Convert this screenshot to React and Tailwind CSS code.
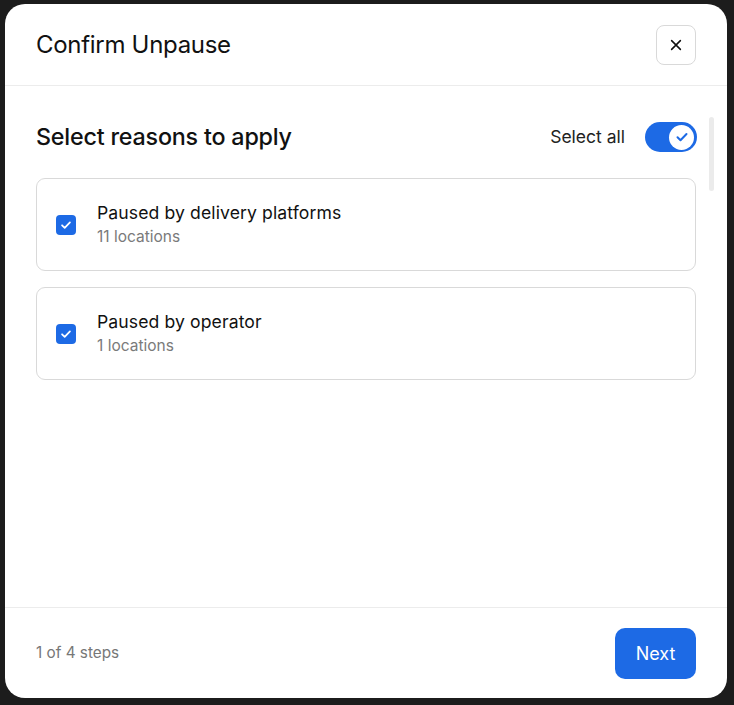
import { useState } from "react";

const reasons = [
    { id: "platforms", title: "Paused by delivery platforms", count: 11 },
    { id: "operator", title: "Paused by operator", count: 1 },
];

const Check = ({ className }) => (
    <svg viewBox="0 0 16 16" fill="none" className={className}>
        <path d="M3.5 8.3l3 3 6-6.3" stroke="currentColor" strokeWidth="2" strokeLinecap="round" strokeLinejoin="round" />
    </svg>
);

const App = () => {
    const [selected, setSelected] = useState({ platforms: true, operator: true });
    const allOn = reasons.every(r => selected[r.id]);

    return (
        <div className="min-h-screen bg-[#1c1c1c] pt-[4px] pl-[5px]" style={{ fontFamily: "Inter, 'Noto Sans', sans-serif" }}>
            <div className="w-[722px] h-[694px] bg-white rounded-[20px] flex flex-col overflow-hidden">
                {/* Header */}
                <div className="h-[82px] flex items-center justify-between px-[31px] border-b border-[#ececec]">
                    <h2 className="text-[24px] text-[#111] tracking-[-0.3px]">Confirm Unpause</h2>
                    <button className="w-[40px] h-[40px] rounded-[8px] border border-[#d9d9d9] flex items-center justify-center text-[#111]">
                        <svg viewBox="0 0 16 16" className="w-[14px] h-[14px]" fill="none">
                            <path d="M3 3l10 10M13 3L3 13" stroke="currentColor" strokeWidth="1.8" strokeLinecap="round" />
                        </svg>
                    </button>
                </div>

                {/* Body */}
                <div className="relative flex-1 px-[31px] pt-[36px]">
                    <div className="absolute right-[13px] top-[31px] w-[5px] h-[74px] rounded-full bg-[#ebebeb]"></div>
                    <div className="flex items-center justify-between h-[30px]">
                        <h3 className="text-[23.3px] font-medium text-[#111] tracking-[-0.2px]">Select reasons to apply</h3>
                        <div className="flex items-center gap-[20px]">
                            <span className="text-[17.5px] text-[#222]">Select all</span>
                            <button
                                onClick={() => {
                                    const v = !allOn;
                                    setSelected({ platforms: v, operator: v });
                                }}
                                className={`w-[52px] h-[30px] mr-[-1px] rounded-full flex items-center px-[3px] ${allOn ? "bg-[#1d6ae5] justify-end" : "bg-[#d4d4d4] justify-start"}`}
                            >
                                <span className="w-[25px] h-[25px] rounded-full bg-white flex items-center justify-center text-[#1d6ae5]">
                                    {allOn && <Check className="w-[16px] h-[16px]" />}
                                </span>
                            </button>
                        </div>
                    </div>

                    <div className="mt-[26px] flex flex-col gap-[16px]">
                        {reasons.map(r => (
                            <label key={r.id} className="h-[93px] border border-[#d9d9d9] rounded-[9px] flex items-center pl-[19px] gap-[21px] cursor-pointer">
                                <span
                                    onClick={() => setSelected({ ...selected, [r.id]: !selected[r.id] })}
                                    className={`w-[20px] h-[20px] rounded-[4px] flex items-center justify-center text-white ${selected[r.id] ? "bg-[#1d6ae5]" : "border border-[#bbb] bg-white"}`}
                                >
                                    {selected[r.id] && <Check className="w-[14px] h-[14px]" />}
                                </span>
                                <div className="flex flex-col">
                                    <span className="text-[17.6px] text-[#111] leading-[24px] tracking-[0.1px]">{r.title}</span>
                                    <span className="text-[15.5px] text-[#7a7a7a] leading-[23px]">{r.count} locations</span>
                                </div>
                            </label>
                        ))}
                    </div>
                </div>

                {/* Footer */}
                <div className="h-[91px] border-t border-[#ececec] flex items-center justify-between px-[31px]">
                    <span className="text-[15.3px] text-[#777]">1 of 4 steps</span>
                    <button className="w-[81px] h-[51px] rounded-[10px] bg-[#1d6ae5] text-white text-[18px]">Next</button>
                </div>
            </div>
        </div>
    );
};

export default App;
